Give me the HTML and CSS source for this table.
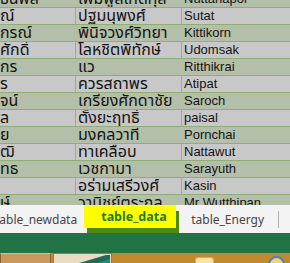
FILE: index.html
```html
<!DOCTYPE html>
<html lang="th">
<head>
<meta charset="utf-8">
<title>table_data</title>
<link rel="stylesheet" href="styles.css">
</head>
<body>
<div class="screen">
  <div class="sheet">
    <div class="rows">
      <div class="row g"><div class="cell ca">ธนพล</div><div class="cell cb">เพิ่มพูลเกิดกุล</div><div class="cell cc">Nuttanapol</div></div>
      <div class="row w"><div class="cell ca">ณ์</div><div class="cell cb">ปฐมนุพงศ์</div><div class="cell cc">Sutat</div></div>
      <div class="row g"><div class="cell ca">กรณ์</div><div class="cell cb">พินิจวงศ์วิทยา</div><div class="cell cc">Kittikorn</div></div>
      <div class="row w"><div class="cell ca">ศักดิ์</div><div class="cell cb">โลหชิตพิทักษ์</div><div class="cell cc">Udomsak</div></div>
      <div class="row g"><div class="cell ca">กร</div><div class="cell cb">แว</div><div class="cell cc">Ritthikrai</div></div>
      <div class="row w"><div class="cell ca">ร</div><div class="cell cb">ควรสถาพร</div><div class="cell cc">Atipat</div></div>
      <div class="row g"><div class="cell ca">จน์</div><div class="cell cb">เกรียงศักดาชัย</div><div class="cell cc">Saroch</div></div>
      <div class="row w"><div class="cell ca">ล</div><div class="cell cb">ตั้งยะฤทธิ์</div><div class="cell cc">paisal</div></div>
      <div class="row g"><div class="cell ca">ย</div><div class="cell cb">มงคลวาที</div><div class="cell cc">Pornchai</div></div>
      <div class="row w"><div class="cell ca">ฒิ</div><div class="cell cb">ทาเคลือบ</div><div class="cell cc">Nattawut</div></div>
      <div class="row g"><div class="cell ca">ทธ</div><div class="cell cb">เวชกามา</div><div class="cell cc">Sarayuth</div></div>
      <div class="row w"><div class="cell ca"></div><div class="cell cb">อร่ามเสรีวงศ์</div><div class="cell cc">Kasin</div></div>
      <div class="row g"><div class="cell ca">ษ์</div><div class="cell cb">วานิชย์ตระกูล</div><div class="cell cc">Mr Wutthipan</div></div>
    </div>
  </div>
  <div class="tabs">
    <span class="tab tab-cut">table_newdata</span>
    <span class="tab tab-active">table_data</span>
    <span class="tab">table_Energy</span>
    <span class="tab-sep"></span>
  </div>
  <div class="status"></div>
  <div class="taskbar">
    <span class="tb-btn tb-first"></span>
    <span class="tb-btn tb-selected">
      <svg class="tb-glyph" width="57" height="10" viewBox="0 0 57 10"><polygon points="22,10 52,1 56,1 56,10" fill="#1f6a5a"/><polygon points="40,10 56,5 56,10" fill="#2c8a6e"/></svg>
    </span>
    <span class="tb-icon tb-folder"></span>
    <span class="tb-icon tb-globe"></span>
  </div>
</div>
</body>
</html>
```

FILE: styles.css
```css
html, body {
  margin: 0;
  padding: 0;
  background: #c9c9c9;
}
.screen {
  width: 290px;
  height: 263px;
  overflow: hidden;
  display: flex;
  flex-direction: column;
}
.sheet {
  height: 205px;
  flex: none;
  overflow: hidden;
}
.rows {
  margin-top: -9px;
}
.row {
  display: grid;
  grid-template-columns: 76px 106px 1fr;
  height: 17px;
  box-sizing: border-box;
  border-bottom: 1px solid #8fae76;
  font-family: "Liberation Sans", "Noto Sans Thai", "Noto Sans", sans-serif;
  font-size: 13px;
  line-height: 16px;
  color: #141414;
}
.row.g { background: #b4bfa9; }
.row.w { background: #c8c8c8; }
.cell {
  white-space: nowrap;
  overflow: hidden;
  padding-left: 2px;
}
.ca, .cb {
  font-size: 16px;
  border-right: 1px solid transparent;
}
.ca { padding-left: 0; }
.row.w .ca, .row.w .cb { border-right-color: #a4a4a4; }

.tabs {
  height: 28px;
  flex: none;
  background: #f3f3f3;
  display: flex;
  align-items: center;
  font-family: "Noto Sans", "Open Sans", sans-serif;
  font-size: 12px;
  color: #454545;
}
.tab { white-space: nowrap; }
.tab-cut { margin-left: -5px; }
.tab-active {
  align-self: flex-start;
  margin-left: 7px;
  width: 92px;
  height: 23px;
  line-height: 23px;
  box-sizing: border-box;
  padding-left: 17px;
  background: #ffff00;
  color: #1f7a1f;
  font-weight: bold;
  font-size: 12.5px;
  box-shadow: 3px 6px 0 #4f8a10;
}
.tab-active + .tab { margin-left: 15px; }
.tab-sep {
  width: 1px;
  height: 17px;
  background: #b0b0b0;
  margin-left: 14px;
}
.status {
  height: 20px;
  flex: none;
  background: #217346;
}
.taskbar {
  flex: 1;
  display: flex;
  align-items: flex-start;
  background: #c18a2e;
}
.tb-btn {
  display: block;
  height: 10px;
  box-sizing: border-box;
  flex: none;
}
.tb-first {
  width: 51px;
  background: #c9985e;
  border: 1px solid #8a6430;
  border-top-color: #e0bd88;
  border-bottom: 0;
}
.tb-selected {
  width: 59px;
  margin-left: 2px;
  background: #e9dcc2;
  border: 1px solid #a07840;
  border-bottom: 0;
}
.tb-glyph { display: block; }
.tb-icon { display: block; flex: none; }
.tb-folder {
  width: 17px;
  height: 6px;
  margin-top: 4px;
  margin-left: 83px;
  background: #f3e4a8;
  border: 1px solid #cfae5c;
  border-bottom: 0;
  border-radius: 3px 3px 0 0;
}
.tb-globe {
  width: 17px;
  height: 17px;
  margin-top: 3px;
  margin-left: 54px;
  box-sizing: border-box;
  border-radius: 50%;
  border: 2px solid #3c86d4;
  background: #f4d56a;
}
```
